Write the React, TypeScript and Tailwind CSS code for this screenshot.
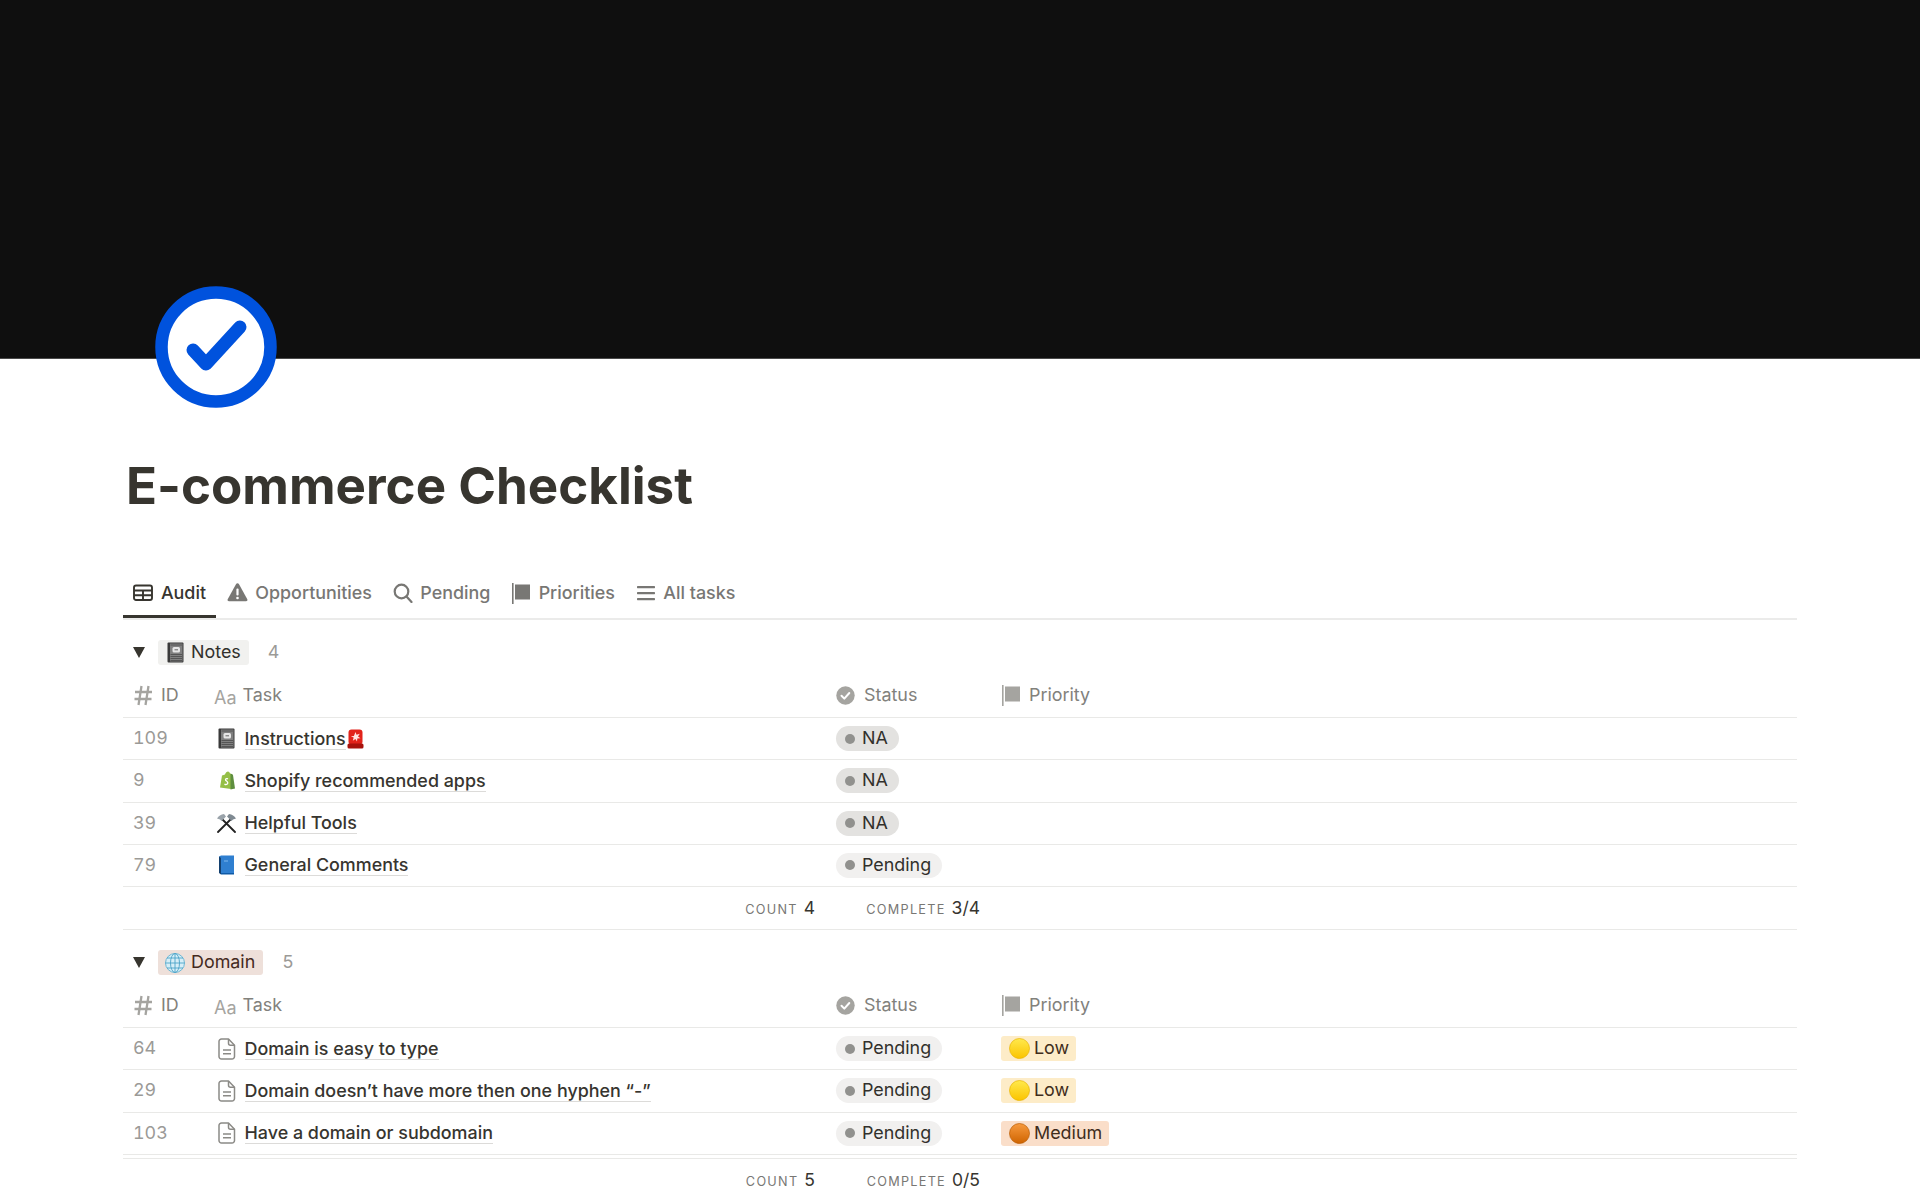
import React from "react"

const font = { fontFamily: "Inter, 'Noto Sans', sans-serif" }

function TableIcon() {
	return (
		<svg width="20" height="20" viewBox="0 0 20 20" fill="none" stroke="#37352f" strokeWidth="1.900">
			<rect x="1" y="2.500" width="18" height="14.500" rx="2" />
			<path d="M1 7.500h18M1 12.300h18M10 7.500v9.500" />
		</svg>
	)
}

function WarningIcon() {
	return (
		<svg width="21" height="20" viewBox="0 0 21 20" className="-mt-[2px]">
			<path d="M10.500 1.200c.6 0 1.100.3 1.400.8l8.400 15.200c.5 1-.2 2-1.300 2H2c-1.100 0-1.800-1-1.300-2L9.100 2c.3-.5.8-.8 1.400-.8z" fill="#787774" />
			<rect x="9.400" y="6.500" width="2.200" height="7" rx="1" fill="#fff" />
			<circle cx="10.500" cy="16" r="1.300" fill="#fff" />
		</svg>
	)
}

function SearchIcon() {
	return (
		<svg width="20" height="20" viewBox="0 0 20 20" fill="none" stroke="#787774" strokeWidth="2.200" strokeLinecap="round" className="-mt-[1px]">
			<circle cx="8.500" cy="8.500" r="6.800" />
			<path d="M13.500 13.500l5 5.500" />
		</svg>
	)
}

function FlagIcon({ color = "#787774" }: { color?: string }) {
	return (
		<svg width="20" height="21" viewBox="0 0 20 21" fill={color}>
			<rect x="1" y="0" width="1.600" height="21" />
			<rect x="4" y="1.500" width="15" height="15" />
		</svg>
	)
}

function ListIcon() {
	return (
		<svg width="20" height="20" viewBox="0 0 20 20" fill="#787774" className="-mt-[1px]">
			<rect x="1" y="3" width="18" height="2.200" rx=".6" />
			<rect x="1" y="9" width="18" height="2.200" rx=".6" />
			<rect x="1" y="15" width="18" height="2.200" rx=".6" />
		</svg>
	)
}

function HashIcon() {
	return (
		<svg width="19" height="21" viewBox="0 0 19 21" fill="none" stroke="#a5a4a0" strokeWidth="2.300">
			<path d="M7.500 1L4.500 20M14.500 1L11.500 20M1 7h17M.5 14h17" />
		</svg>
	)
}

function CheckCircleIcon() {
	return (
		<svg width="19" height="19" viewBox="0 0 19 19">
			<circle cx="9.500" cy="9.500" r="9.200" fill="#a5a4a0" />
			<path d="M5.500 9.800l2.800 2.800 5-5.600" fill="none" stroke="#fff" strokeWidth="2" strokeLinecap="round" strokeLinejoin="round" />
		</svg>
	)
}

function DocIcon() {
	return (
		<svg width="18" height="22" viewBox="0 0 18 22" fill="none" stroke="#8b8a86" strokeWidth="1.500" strokeLinejoin="round">
			<path d="M3.500 1h7l6 6.200V18.500a2.500 2.500 0 0 1-2.500 2.500H3.500A2.500 2.500 0 0 1 1 18.500v-15A2.500 2.500 0 0 1 3.500 1z" />
			<path d="M10.500 1v4.200a2 2 0 0 0 2 2h4M5 12h8M5 15.800h8" />
		</svg>
	)
}

function NotebookIcon() {
	return (
		<svg width="17" height="21" viewBox="0 0 17 21">
			<rect x="0.500" y="0.500" width="16" height="20" rx="1" fill="#3a3a3a" />
			<rect x="3" y="1.500" width="12.500" height="18" fill="#808080" />
			<path d="M3.500 3h11.500M3.500 12.500h11.500M3.500 14.500h11.500M3.500 16.500h11.500M3.500 18.500h11.500" stroke="#4a4a4a" strokeWidth=".8" />
			<rect x="5.500" y="5" width="7.500" height="5.500" rx="1.500" fill="#e6e6e6" />
			<path d="M7.500 7.800h3.500" stroke="#666" strokeWidth="1" />
		</svg>
	)
}

function ShopifyIcon() {
	return (
		<svg width="16" height="19" viewBox="0 0 16 19">
			<path d="M1 16.500L3 4.500 6 3.500C6.500 1.500 8 .5 9 .5c1 0 1.800 1 2 2l1 .3V18L1 16.500z" fill="#95bf47" />
			<path d="M11.500 2.800l1.500.2 1 1 2 13.500-4.500 1z" fill="#5e8e3e" />
			<path d="M9 7.800c-.6-.3-2.400-.5-2.500.9-.1 1.300 2.400 1.500 2.300 3.300-.1 1.700-2.100 1.900-3.300 1.100" fill="none" stroke="#fff" strokeWidth="1.300" />
		</svg>
	)
}

function ToolsIcon() {
	return (
		<svg width="21" height="20" viewBox="0 0 21 20" fill="none">
			<path d="M16 5L2 19M5 5l14 14" stroke="#222" strokeWidth="1.800" strokeLinecap="round" />
			<path d="M1 5.500C2.500 3 5 1.200 8 1l2 2.500-4.500 4.500L4 6.500z" fill="#9aa3aa" />
			<path d="M20 5.500C18.500 3 16 1.200 13 1l-2 2.500 4.500 4.500L17 6.500z" fill="#7f8a92" />
		</svg>
	)
}

function BlueBookIcon() {
	return (
		<svg width="17" height="20" viewBox="0 0 17 20">
			<path d="M1 1.500L3 .5h13V18H3z" fill="#2f7fd0" />
			<path d="M1 1.500L3 3v16.500L1 18z" fill="#13406f" />
			<path d="M3 18h13v1.500H3z" fill="#0f5aa6" />
			<path d="M6 6h4" stroke="#7db8ee" strokeWidth="1" />
		</svg>
	)
}

function SirenIcon() {
	return (
		<svg width="17" height="20" viewBox="0 0 17 20" className="ml-[1px]">
			<rect x="1.500" y="0.500" width="14" height="15" rx="3" fill="#e2231a" />
			<path d="M8.500 3l1 2.800 3.300-1-1.800 2.700 2.500 1.700-3.200.3-.3 3.100-1.600-2.600-2.600 1.700.9-3.100L3.800 7.300l3.100-.3z" fill="#ffe4e0" />
			<rect x="0.500" y="14.500" width="16" height="5" rx="1.500" fill="#a8120c" />
		</svg>
	)
}

function GlobeIcon() {
	return (
		<svg width="20" height="20" viewBox="0 0 20 20" fill="none">
			<circle cx="10" cy="10" r="9.500" fill="#d6eef7" stroke="#6fb7d4" />
			<g stroke="#4da3c7" strokeWidth=".9">
				<ellipse cx="10" cy="10" rx="4.500" ry="9.500" />
				<path d="M10 .5v19M.5 10h19M2 5h16M2 15h16" />
			</g>
		</svg>
	)
}

function Ball({ id, from, to, edge }: { id: string; from: string; to: string; edge: string }) {
	return (
		<svg width="21" height="21" viewBox="0 0 21 21">
			<defs>
				<linearGradient id={id} x1="0" y1="0" x2="0" y2="1">
					<stop offset="0" stopColor={from} />
					<stop offset="1" stopColor={to} />
				</linearGradient>
			</defs>
			<circle cx="10.500" cy="10.500" r="10" fill={`url(#${id})`} stroke={edge} strokeWidth=".7" />
		</svg>
	)
}

type Row = {
	id: string
	icon: React.ReactNode
	task: string
	extra?: React.ReactNode
	status: string
	priority?: "Low" | "Medium"
}

const noteRows: Row[] = [
	{ id: "109", icon: <NotebookIcon />, task: "Instructions", extra: <SirenIcon />, status: "NA" },
	{ id: "9", icon: <ShopifyIcon />, task: "Shopify recommended apps", status: "NA" },
	{ id: "39", icon: <ToolsIcon />, task: "Helpful Tools", status: "NA" },
	{ id: "79", icon: <BlueBookIcon />, task: "General Comments", status: "Pending" },
]

const domainRows: Row[] = [
	{ id: "64", icon: <DocIcon />, task: "Domain is easy to type", status: "Pending", priority: "Low" },
	{ id: "29", icon: <DocIcon />, task: "Domain doesn’t have more then one hyphen “-”", status: "Pending", priority: "Low" },
	{ id: "103", icon: <DocIcon />, task: "Have a domain or subdomain", status: "Pending", priority: "Medium" },
]

const cols = "grid grid-cols-[84px_621px_165px_1fr]"

function Tab({ icon, label, active }: { icon: React.ReactNode; label: string; active?: boolean }) {
	return (
		<div className={`flex h-[48px] items-center gap-[7.500px] border-b-[3px] px-[10.400px] pt-[1px] ${active ? "border-[#37352f] text-[#37352f]" : "border-transparent text-[#787774]"}`}>
			{icon}
			<span>{label}</span>
		</div>
	)
}

function StatusPill({ label }: { label: string }) {
	return (
		<span className={`flex h-[25px] items-center gap-[7px] rounded-full pr-[11px] pl-[9px] text-[#32302c] ${label === "NA" ? "bg-[#e3e2e0]" : "bg-[#f1f0ef]"}`}>
			<span className="size-[10px] rounded-full bg-[#91918e]" />
			{label}
		</span>
	)
}

function PriorityPill({ level, index }: { level: "Low" | "Medium"; index: number }) {
	const low = level === "Low"
	return (
		<span className={`flex h-[25px] items-center gap-[4px] rounded-[3px] pr-[7px] pl-[8px] text-[#402c1b] ${low ? "bg-[#fdecc8]" : "bg-[#fadec9]"}`}>
			<Ball id={`ball-${index}`} from={low ? "#ffe94d" : "#f79a3e"} to={low ? "#fbc400" : "#cf6400"} edge={low ? "#e8b400" : "#b85a00"} />
			{level}
		</span>
	)
}

function GroupHeader({ icon, label, count, pill, text }: { icon: React.ReactNode; label: string; count: number; pill: string; text: string }) {
	return (
		<div className="flex h-[25px] items-center">
			<svg className="ml-[10px]" width="12" height="11" viewBox="0 0 12 11" fill="#37352f">
				<path d="M0 0h12L6 11z" />
			</svg>
			<span className={`ml-[13px] flex h-[25px] items-center rounded-[3px] pr-[8px] pl-[7px] ${pill} ${text}`}>
				<span className="flex w-[26px]">
					<span className="flex w-[20px] justify-center">{icon}</span>
				</span>
				{label}
			</span>
			<span className="ml-[19px] text-[#9b9a97] tabular-nums">{count}</span>
		</div>
	)
}

function HeadRow() {
	return (
		<div className={`${cols} h-[53px] border-b border-[#e9e9e7] pt-[9px] text-[#82817c]`}>
			<div className="flex items-center gap-[8px] pl-[11px]">
				<HashIcon />
				<span>ID</span>
			</div>
			<div className="flex items-center gap-[6px] pl-[7px]">
				<span className="mt-[3px] text-[18px] text-[#a5a4a0]">Aa</span>
				<span>Task</span>
			</div>
			<div className="flex items-center gap-[9px] pl-[8px]">
				<CheckCircleIcon />
				<span>Status</span>
			</div>
			<div className="flex items-center gap-[8px] pl-[8px]">
				<FlagIcon color="#a5a4a0" />
				<span>Priority</span>
			</div>
		</div>
	)
}

function TaskRow({ row, index }: { row: Row; index: number }) {
	return (
		<div className={`${cols} h-[42.250px] items-center border-b border-[#e9e9e7]`}>
			<div className="pl-[10px] text-[#9b9a97] tabular-nums">{row.id}</div>
			<div className="flex items-center pl-[5px]">
				<span className="flex w-[32.500px] justify-center pr-[3px]">{row.icon}</span>
				<span className="border-b border-[#dcdbd9] leading-[21px] font-medium text-[#37352f]">{row.task}</span>
				{row.extra}
			</div>
			<div className="flex pl-[8px]">
				<StatusPill label={row.status} />
			</div>
			<div className="flex pl-[8px]">
				{row.priority && <PriorityPill level={row.priority} index={index} />}
			</div>
		</div>
	)
}

function Summary({ count, complete }: { count: number; complete: string }) {
	return (
		<div className={`${cols} h-[43px] items-center border-b border-[#e9e9e7]`}>
			<div />
			<div className="flex items-baseline justify-end gap-[6px] pr-[13px]">
				<span className="text-[12.700px] tracking-[0.1em] text-[#787774]">COUNT</span>
				<span className="text-[17.500px] text-[#37352f]">{count}</span>
			</div>
			<div className="flex items-baseline justify-end gap-[6px] pr-[13px]">
				<span className="text-[12.700px] tracking-[0.1em] text-[#787774]">COMPLETE</span>
				<span className="text-[17.500px] text-[#37352f]">{complete}</span>
			</div>
		</div>
	)
}

export default function App() {
	return (
		<div className="h-[1199px] overflow-hidden bg-white text-[17.900px]" style={font}>
			<div className="h-[359px] border-b border-[#4a4a4a] bg-[#0f0f0f]" />
			<div className="px-[123px]">
				<svg className="relative -mt-[73px] ml-[32px] block" width="122" height="122" viewBox="0 0 122 122">
					<circle cx="61" cy="61" r="54.500" fill="#fff" stroke="#0052dd" strokeWidth="12.500" />
					<path d="M38 64l13 14 34-37" fill="none" stroke="#0052dd" strokeWidth="13" strokeLinecap="round" strokeLinejoin="round" />
				</svg>
				<h1 className="mt-[47px] ml-[3px] h-[60px] text-[51.100px] leading-[60px] font-bold text-[#37352f]">E-commerce Checklist</h1>
				<div className="mt-[55px] flex border-b-2 border-[#ebebea] font-medium">
					<Tab icon={<TableIcon />} label="Audit" active />
					<Tab icon={<WarningIcon />} label="Opportunities" />
					<Tab icon={<SearchIcon />} label="Pending" />
					<Tab icon={<FlagIcon />} label="Priorities" />
					<Tab icon={<ListIcon />} label="All tasks" />
				</div>

				<div className="mt-[20px]">
					<GroupHeader icon={<NotebookIcon />} label="Notes" count={4} pill="bg-[#f1f1ef]" text="text-[#32302c]" />
					<HeadRow />
					{noteRows.map((row, i) => (
						<TaskRow key={row.id} row={row} index={i} />
					))}
					<Summary count={4} complete="3/4" />
				</div>

				<div className="mt-[20px]">
					<GroupHeader icon={<GlobeIcon />} label="Domain" count={5} pill="bg-[#eee0da]" text="text-[#442a1e]" />
					<HeadRow />
					{domainRows.map((row, i) => (
						<TaskRow key={row.id} row={row} index={i} />
					))}
					<div className="mt-[3px] border-t border-[#e9e9e7]" />
					<Summary count={5} complete="0/5" />
				</div>
			</div>
		</div>
	)
}
